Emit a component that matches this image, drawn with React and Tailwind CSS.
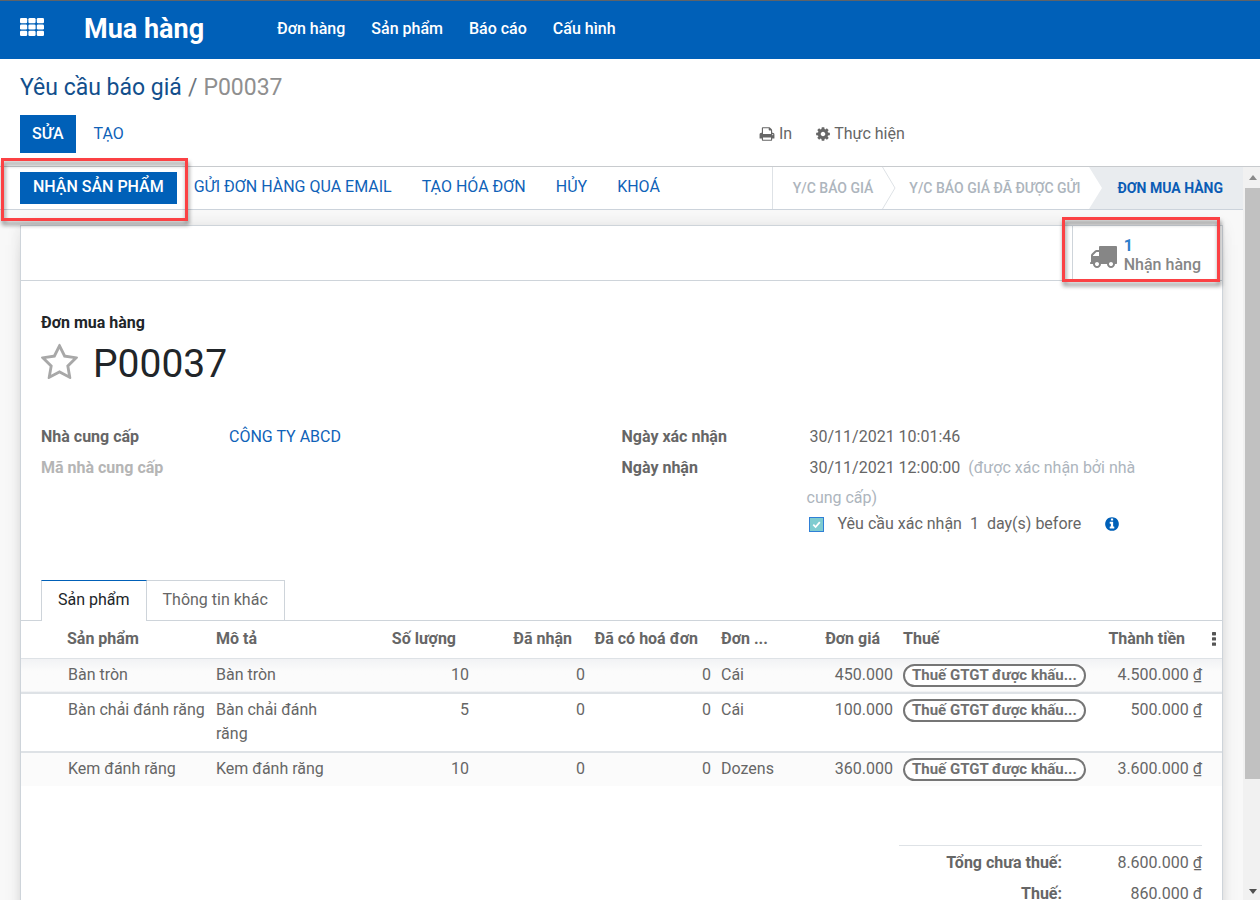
import React from "react";

function Icon({ box, d, className }) {
  return (
    <svg viewBox={box} fill="currentColor" className={className} aria-hidden="true">
      <path d={d} />
    </svg>
  );
}

const PRINT =
  "M448 1536h896v-256h-896v256zm0-640h896v-384h-160q-40 0-68-28t-28-68v-160h-640v640zm1152 64q0-26-19-45t-45-19-45 19-19 45 19 45 45 19 45-19 19-45zm128 0v416q0 13-9.5 22.5t-22.5 9.5h-224v160q0 40-28 68t-68 28h-960q-40 0-68-28t-28-68v-160h-224q-13 0-22.5-9.5t-9.5-22.5v-416q0-79 56.5-135.5t135.5-56.5h64v-544q0-40 28-68t68-28h672q40 0 88 20t76 48l152 152q28 28 48 76t20 88v256h64q79 0 135.5 56.5t56.5 135.5z";
const COG =
  "M1024 896q0-106-75-181t-181-75-181 75-75 181 75 181 181 75 181-75 75-181zm512-109v222q0 12-8 23t-20 13l-185 28q-19 54-39 91 35 50 107 138 10 12 10 25t-9 23q-27 37-99 108t-94 71q-12 0-26-9l-138-108q-44 23-91 38-16 136-29 186-7 28-36 28h-222q-14 0-24.5-8.5t-11.5-21.5l-28-184q-49-16-90-37l-141 107q-10 9-25 9-14 0-25-11-126-114-165-168-7-10-7-23 0-12 8-23 15-21 51-66.5t54-70.5q-27-50-41-99l-183-27q-13-2-21-12.5t-8-23.5v-222q0-12 8-23t19-13l186-28q14-46 39-92-40-57-107-138-10-12-10-24 0-10 9-23 26-36 98.5-107.5t94.5-71.5q13 0 26 10l138 107q44-23 91-38 16-136 29-186 7-28 36-28h222q14 0 24.5 8.5t11.5 21.5l28 184q49 16 90 37l142-107q9-9 24-9 13 0 25 10 129 119 165 170 7 8 7 22 0 12-8 23-15 21-51 66.5t-54 70.5q26 50 41 98l183 28q13 2 21 12.5t8 23.5z";
const TRUCK =
  "M640 1408q0-52-38-90t-90-38-90 38-38 90 38 90 90 38 90-38 38-90zm-384-512h384v-256h-158q-13 0-22 9l-195 195q-9 9-9 22v30zm1280 512q0-52-38-90t-90-38-90 38-38 90 38 90 90 38 90-38 38-90zm256-1088v1024q0 15-4 26.5t-13.5 18.5-16.5 11.5-23.5 6-22.5 2-25.5 0-22.5-.5q0 106-75 181t-181 75-181-75-75-181h-384q0 106-75 181t-181 75-181-75-75-181h-64q-3 0-22.5.5t-25.5 0-22.5-2-23.5-6-16.5-11.5-13.5-18.5-4-26.5q0-26 19-45t45-19v-320q0-8-.5-35t0-38 2.5-34.5 6.5-37 14-30.5 22.5-30l198-198q19-19 50.5-32t58.5-13h160v-192q0-26 19-45t45-19h1024q26 0 45 19t19 45z";
const STAR =
  "M1137 1004l306-297-422-62-189-382-189 382-422 62 306 297-73 421 378-199 377 199zm527-357q0 22-26 48l-363 354 86 500q1 7 1 20 0 50-41 50-19 0-40-12l-449-236-449 236q-22 12-40 12-21 0-31.5-14.5t-10.5-35.5q0-6 2-20l86-500-364-354q-25-27-25-48 0-37 56-46l502-73 225-455q19-41 49-41t49 41l225 455 502 73q56 9 56 46z";
const INFO =
  "M1024 1376v-160q0-14-9-23t-23-9h-96v-512q0-14-9-23t-23-9h-320q-14 0-23 9t-9 23v160q0 14 9 23t23 9h96v320h-96q-14 0-23 9t-9 23v160q0 14 9 23t23 9h448q14 0 23-9t9-23zm-128-896v-160q0-14-9-23t-23-9h-192q-14 0-23 9t-9 23v160q0 14 9 23t23 9h192q14 0 23-9t9-23zm640 416q0 209-103 385.5t-279.5 279.5-385.5 103-385.5-103-279.5-279.5-103-385.5 103-385.5 279.5-279.5 385.5-103 385.5 103 279.5 279.5 103 385.5z";

function AppsIcon() {
  return (
    <svg viewBox="0 0 24 18" fill="currentColor" className="h-[18px] w-6" aria-hidden="true">
      {[0, 6.4, 12.8].map((y) =>
        [0, 8.4, 16.8].map((x) => <rect key={`${x}-${y}`} x={x} y={y} width="7.2" height="5.2" rx="1.3" />)
      )}
    </svg>
  );
}

function Header() {
  return (
    <header className="flex h-[59px] shrink-0 items-center border-t border-[#5f6368] bg-[#0060b8] px-5 pb-[2px] text-white">
      <button type="button" aria-label="Menu" className="mr-10 pb-1">
        <AppsIcon />
      </button>
      <a href="#home" className="mr-[73px] text-[27px] leading-8 font-bold">
        Mua hàng
      </a>
      <nav className="flex gap-[26px] font-medium">
        <a href="#orders">Đơn hàng</a>
        <a href="#products">Sản phẩm</a>
        <a href="#reports">Báo cáo</a>
        <a href="#config">Cấu hình</a>
      </nav>
    </header>
  );
}

function ControlPanel() {
  return (
    <div className="flex shrink-0 flex-col gap-[11px] border-b border-[#c8cbce] pt-[13px] pb-[13px]">
      <div className="px-5 text-[23px] leading-8 text-[#8f8f8f]">
        <a href="#rfq" className="text-[#124f8c]">
          Yêu cầu báo giá
        </a>
        <span className="px-[6px] text-[#6c757d]">/</span>
        <span>P00037</span>
      </div>
      <div className="flex items-center">
        <div className="flex w-3/5 gap-[6px] pl-5">
          <button type="button" className="h-[38px] bg-[#0060b8] px-3 font-medium text-white">
            SỬA
          </button>
          <button type="button" className="h-[38px] px-3 text-[#0f62b8]">
            TẠO
          </button>
        </div>
        <div className="flex gap-6 pl-[3px]">
          <button type="button" className="flex items-center gap-1">
            <Icon box="0 0 1792 1792" d={PRINT} className="size-4" />
            In
          </button>
          <button type="button" className="flex items-center gap-1">
            <Icon box="0 0 1536 1792" d={COG} className="h-4 w-[14px]" />
            Thực hiện
          </button>
        </div>
      </div>
    </div>
  );
}

function HighlightFrame({ className }) {
  return (
    <span
      aria-hidden="true"
      className={`pointer-events-none absolute z-10 border-3 border-[#fb4144] drop-shadow-[1px_4px_2px_rgba(0,0,0,0.45)] ${className}`}
    />
  );
}

function StatusBar() {
  return (
    <div className="flex h-[43px] items-stretch border-b border-[#ccd3db] bg-white">
      <div className="flex flex-1 items-start gap-1 pt-[5px] pl-5 text-[#0f62b8]">
        <div className="relative">
          <button type="button" className="h-8 bg-[#0060b8] px-[13px] pb-[2px] font-medium text-white">
            NHẬN SẢN PHẨM
          </button>
          <HighlightFrame className="-top-[14px] -right-[11px] -bottom-[17px] -left-[19px]" />
        </div>
        <button type="button" className="h-8 px-[13px] pb-[2px]">GỬI ĐƠN HÀNG QUA EMAIL</button>
        <button type="button" className="h-8 px-[13px] pb-[2px]">TẠO HÓA ĐƠN</button>
        <button type="button" className="h-8 px-[13px] pb-[2px]">HỦY</button>
        <button type="button" className="h-8 px-[13px] pb-[2px]">KHOÁ</button>
      </div>
      <ol className="flex items-stretch border-l border-[#dee2e6] text-[14px] font-medium text-[#adb5bd]">
        <li className="flex items-center gap-[9px] pl-5">
          Y/C BÁO GIÁ
          <svg viewBox="0 0 14 42" preserveAspectRatio="none" className="h-full w-[14px]" aria-hidden="true">
            <path d="M.5 0L13 21L.5 42" fill="none" stroke="#dee2e6" />
          </svg>
        </li>
        <li className="flex items-center gap-[9px] pl-[13px]">
          Y/C BÁO GIÁ ĐÃ ĐƯỢC GỬI
          <svg viewBox="0 0 14 42" preserveAspectRatio="none" className="h-full w-[14px]" aria-hidden="true">
            <path d="M0 0H14V42H0L13 21Z" fill="#e9ecef" />
          </svg>
        </li>
        <li className="flex items-center bg-[#e9ecef] pr-5 pl-[14px] font-bold text-[#0b5cb5]">ĐƠN MUA HÀNG</li>
      </ol>
    </div>
  );
}

function ButtonBox() {
  return (
    <div className="flex h-[55px] justify-end border-b border-[#ced4da]">
      <div className="relative">
        <button
          type="button"
          className="flex h-full items-center gap-[7px] border-l border-[#ced4da] pt-1 pr-[21px] pl-4 text-left leading-[19px] text-[#868686]"
        >
          <Icon box="0 0 1792 1792" d={TRUCK} className="mt-[2px] size-7" />
          <span className="font-medium">
            <span className="block font-bold text-[#2f7fcb]">1</span>
            Nhận hàng
          </span>
        </button>
        <HighlightFrame className="-top-[9px] right-[2px] -bottom-[2px] -left-[10px]" />
      </div>
    </div>
  );
}

function Details() {
  return (
    <div className="grid grid-cols-2 px-5 pt-8">
      <dl className="grid grid-cols-[188px_1fr] content-start gap-y-[7px]">
        <dt className="font-bold">Nhà cung cấp</dt>
        <dd>
          <a href="#vendor" className="text-[#0f62b8]">
            CÔNG TY ABCD
          </a>
        </dd>
        <dt className="font-bold text-[#b5b5b5]">Mã nhà cung cấp</dt>
        <dd />
      </dl>
      <dl className="grid grid-cols-[185px_1fr] content-start">
        <dt className="font-bold">Ngày xác nhận</dt>
        <dd className="pl-[3px]">30/11/2021 10:01:46</dd>
        <dt className="pt-[7px] font-bold">Ngày nhận</dt>
        <dd className="pt-1 pr-10 leading-[30px]">
          <span className="pr-2 pl-[3px]">30/11/2021 12:00:00</span>
          <span className="text-[#adb5bd]">(được xác nhận bởi nhà cung cấp)</span>
        </dd>
        <dd className="col-start-2 flex items-center pl-[2px] leading-[22px]">
          <span className="relative mr-[14px] size-[15px]">
            <input
              id="reminder"
              type="checkbox"
              defaultChecked
              className="block size-[15px] appearance-none border border-[#2f7fd6] bg-[#7fccd0]"
            />
            <svg viewBox="0 0 15 15" className="pointer-events-none absolute inset-0" aria-hidden="true">
              <path d="M4.3 7.6L6.6 10L10.8 5.2" fill="none" stroke="white" strokeWidth="1.8" />
            </svg>
          </span>
          <label htmlFor="reminder" className="mr-2">
            Yêu cầu xác nhận
          </label>
          <span className="mr-2">1</span>
          <span className="mr-6">day(s) before</span>
          <Icon box="0 0 1536 1792" d={INFO} className="h-4 w-[14px] text-[#0060b8]" />
        </dd>
      </dl>
    </div>
  );
}

const lines = [
  { name: "Bàn tròn", qty: "10", uom: "Cái", price: "450.000", total: "4.500.000 ₫" },
  { name: "Bàn chải đánh răng", qty: "5", uom: "Cái", price: "100.000", total: "500.000 ₫" },
  { name: "Kem đánh răng", qty: "10", uom: "Dozens", price: "360.000", total: "3.600.000 ₫" },
];

const TH = "px-[5px] py-0 font-bold whitespace-nowrap";
const TH_NUM = "pr-[18px] pl-0 text-right font-bold whitespace-nowrap";
const TD = "px-[5px] pt-1 pb-[5px] align-top";
const TD_NUM = "px-[5px] pt-1 pb-[5px] text-right align-top whitespace-nowrap";

function OrderLines() {
  return (
    <table className="w-full table-fixed border-collapse text-left">
      <colgroup>
        <col className="w-[41px]" />
        <col className="w-[149px]" />
        <col />
        <col className="w-[116px]" />
        <col className="w-[116px]" />
        <col className="w-[126px]" />
        <col className="w-[74px]" />
        <col className="w-[108px]" />
        <col className="w-[195px]" />
        <col className="w-[109px]" />
        <col className="w-[20px]" />
      </colgroup>
      <thead>
        <tr className="h-[37px] border-b border-[#dee2e6]">
          <td />
          <th className={TH}>Sản phẩm</th>
          <th className={TH}>Mô tả</th>
          <th className={TH_NUM}>Số lượng</th>
          <th className={TH_NUM}>Đã nhận</th>
          <th className={TH_NUM}>Đã có hoá đơn</th>
          <th className={TH}>Đơn ...</th>
          <th className={TH_NUM}>Đơn giá</th>
          <th className={TH}>Thuế</th>
          <th className="pr-[17px] text-right font-bold whitespace-nowrap">Thành tiền</th>
          <td>
            <button type="button" aria-label="Cột" className="ml-[10px] block">
              <svg viewBox="0 0 4 14" className="h-[14px] w-1" fill="#555" aria-hidden="true">
                <rect width="4" height="3.4" rx=".6" />
                <rect y="5.2" width="4" height="3.4" rx=".6" />
                <rect y="10.4" width="4" height="3.4" rx=".6" />
              </svg>
            </button>
          </td>
        </tr>
      </thead>
      <tbody>
        {lines.map((l) => (
          <tr
            key={l.name}
            className="border-b-2 border-[#dee2e6] odd:bg-[#fbfbfb] first:bg-linear-to-b first:from-[#f1f2f4] first:to-[#fbfbfb] first:to-40% last:border-b-0"
          >
            <td />
            <td className="px-[5px] pt-1 pb-[5px] pl-[6px] align-top whitespace-nowrap">{l.name}</td>
            <td className={TD}>
              <div className="max-w-[130px]">{l.name}</div>
            </td>
            <td className={TD_NUM}>{l.qty}</td>
            <td className={TD_NUM}>0</td>
            <td className={TD_NUM}>0</td>
            <td className={TD}>{l.uom}</td>
            <td className={TD_NUM}>{l.price}</td>
            <td className={TD}>
              <span className="mt-[1px] block h-[23px] w-[183px] rounded-full border-2 border-[#767676] bg-white px-[7px] text-[15px] leading-[18px] font-bold whitespace-nowrap text-[#707070]">
                Thuế GTGT được khấu...
              </span>
            </td>
            <td colSpan="2" className="pt-1 pr-5 pb-[5px] text-right align-top whitespace-nowrap">
              {l.total}
            </td>
          </tr>
        ))}
      </tbody>
    </table>
  );
}

function Totals() {
  return (
    <div className="mt-[59px] flex justify-end pr-5">
      <dl className="grid w-[303px] grid-cols-[163px_1fr] gap-y-[7px] border-t border-[#dee2e6] pt-[5px] text-right">
        <dt className="font-bold">Tổng chưa thuế:</dt>
        <dd>8.600.000 ₫</dd>
        <dt className="font-bold">Thuế:</dt>
        <dd>860.000 ₫</dd>
      </dl>
    </div>
  );
}

function Sheet() {
  return (
    <main className="mx-5 mt-[15px] min-h-screen border border-[#ced4da] bg-white shadow-[0_5px_20px_-15px_rgba(0,0,0,0.6),0_0_14px_rgba(0,0,0,0.08)]">
      <ButtonBox />
      <div className="px-5 pt-[30px]">
        <div className="font-bold text-[#212529]">Đơn mua hàng</div>
        <h1 className="flex h-[58px] items-center gap-[15px] text-[39px] leading-[48px] text-[#212529]">
          <button type="button" aria-label="Đánh dấu" className="pb-[2px] text-[#a8a8a8]">
            <Icon box="0 0 1664 1792" d={STAR} className="h-10 w-[37px]" />
          </button>
          P00037
        </h1>
      </div>
      <Details />
      <div role="tablist" className="mt-[45px] flex border-b border-[#ced4da] pl-5">
        <button
          type="button"
          role="tab"
          aria-selected="true"
          className="-mb-px h-[41px] border-x border-t border-x-[#ced4da] border-t-[#0060b8] bg-white px-4 pb-[2px] text-[#212529]"
        >
          Sản phẩm
        </button>
        <button
          type="button"
          role="tab"
          aria-selected="false"
          className="h-10 border-t border-r border-[#ced4da] px-4 pb-px"
        >
          Thông tin khác
        </button>
      </div>
      <OrderLines />
      <Totals />
    </main>
  );
}

function ScrollTrack() {
  return (
    <div aria-hidden="true" className="flex w-[17px] shrink-0 flex-col items-end bg-[#f1f1f1]">
      <div className="flex h-[21px] w-[15px] items-center justify-center">
        <svg viewBox="0 0 8 5" className="h-[5px] w-2" fill="#8a8a8a">
          <path d="M0 5L4 0L8 5Z" />
        </svg>
      </div>
      <div className="w-[15px] flex-[591] bg-[#c1c1c1]" />
      <div className="flex-[104]" />
      <div className="flex h-[17px] w-[15px] items-center justify-center">
        <svg viewBox="0 0 8 5" className="h-[5px] w-2" fill="#505050">
          <path d="M0 0L4 5L8 0Z" />
        </svg>
      </div>
    </div>
  );
}

export default function App() {
  return (
    <div className="flex h-screen flex-col overflow-hidden bg-white font-[Roboto,'Liberation_Sans',sans-serif] text-[16px] leading-6 text-[#666]">
      <Header />
      <ControlPanel />
      <div className="flex min-h-0 flex-1">
        <div className="min-w-0 flex-1 bg-[#f8f8f8]">
          <StatusBar />
          <Sheet />
        </div>
        <ScrollTrack />
      </div>
    </div>
  );
}
